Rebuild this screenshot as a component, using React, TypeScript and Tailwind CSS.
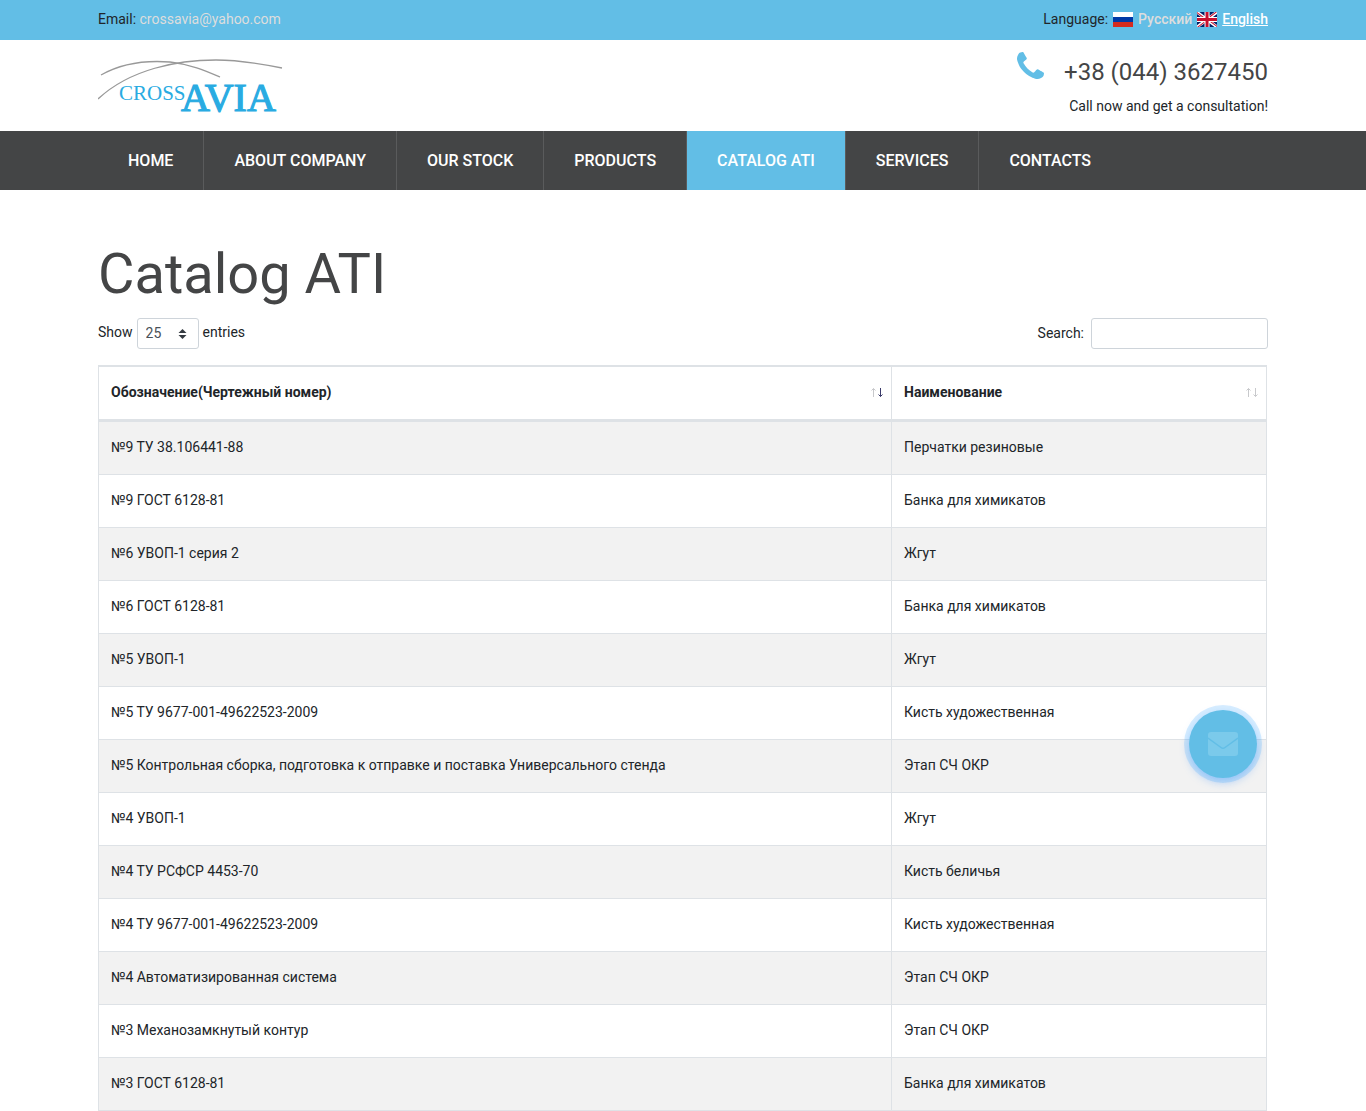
import { useState } from 'react'

type Part = { code: string; name: string }

const NAV = ['Home', 'About company', 'Our stock', 'Products', 'Catalog ATI', 'Services', 'Contacts']

const PARTS: Part[] = [
  { code: '№9 ТУ 38.106441-88', name: 'Перчатки резиновые' },
  { code: '№9 ГОСТ 6128-81', name: 'Банка для химикатов' },
  { code: '№6 УВОП-1 серия 2', name: 'Жгут' },
  { code: '№6 ГОСТ 6128-81', name: 'Банка для химикатов' },
  { code: '№5 УВОП-1', name: 'Жгут' },
  { code: '№5 ТУ 9677-001-49622523-2009', name: 'Кисть художественная' },
  { code: '№5 Контрольная сборка, подготовка к отправке и поставка Универсального стенда', name: 'Этап СЧ ОКР' },
  { code: '№4 УВОП-1', name: 'Жгут' },
  { code: '№4 ТУ РСФСР 4453-70', name: 'Кисть беличья' },
  { code: '№4 ТУ 9677-001-49622523-2009', name: 'Кисть художественная' },
  { code: '№4 Автоматизированная система', name: 'Этап СЧ ОКР' },
  { code: '№3 Механозамкнутый контур', name: 'Этап СЧ ОКР' },
  { code: '№3 ГОСТ 6128-81', name: 'Банка для химикатов' },
]

function Logo() {
  return (
    <svg width="190" height="68" viewBox="0 0 190 68" role="img" aria-label="CrossAvia">
      <g fill="none" stroke="#999" strokeWidth="1.3">
        <path d="M3 17C24 5 46 2 72 4C92 6 108 13 122 19" />
        <path d="M0 41C32 11 80 2 118 2C143 2 164 6 184 10" />
      </g>
      <g fill="#29abe2" fontFamily="'Liberation Serif', serif">
        <text x="21" y="42" fontSize="21">CROSS</text>
        <text x="83" y="53" fontSize="40" stroke="#29abe2" strokeWidth="1.200">AVIA</text>
      </g>
    </svg>
  )
}

function PhoneIcon() {
  return (
    <svg width="27" height="27" viewBox="0 0 1408 1408" fill="#62bee6" aria-hidden="true">
      <path d="M1408 1112q0 27-10 70.5t-21 68.5q-21 50-122 106-94 51-186 51-27 0-52.500-3.500t-57.500-12.500-47.500-14.500-55.500-20.500-49-18q-98-35-175-83-128-79-264.500-215.500t-215.500-264.500q-48-77-83-175-3-9-18-49t-20.500-55.500-14.500-47.500-12.500-57.500-3.500-52.500q0-92 51-186 56-101 106-122 25-11 68.500-21t70.500-10q14 0 21 3 18 6 53 76 11 19 30 54t35 63.500 31 53.500q3 4 17.500 25t21.500 35.500 7 28.500q0 20-28.500 50t-62 55-62 53-28.500 46q0 9 5 22.500t8.500 20.500 14 24 11.500 19q76 137 174 235t235 174q2 1 19 11.500t24 14 20.500 8.500 22.500 5q18 0 46-28.500t53-62 55-62 50-28.500q14 0 28.500 7t35.500 21.500 25 17.500q25 15 53.500 31t63.500 35 54 30q70 35 76 53 3 7 3 21z" />
    </svg>
  )
}

function FlagRu() {
  return (
    <svg width="20" height="15" viewBox="0 0 20 15" aria-hidden="true">
      <path fill="#fff" d="M0 0h20v5H0z" />
      <path fill="#0039a6" d="M0 5h20v5H0z" />
      <path fill="#d52b1e" d="M0 10h20v5H0z" />
    </svg>
  )
}

function FlagGb() {
  return (
    <svg width="20" height="15" viewBox="0 0 640 480" aria-hidden="true">
      <path fill="#012169" d="M0 0h640v480H0z" />
      <path fill="#fff" d="m75 0 244 181L562 0h78v62L400 241l240 178v61h-80L320 301 81 480H0v-60l239-178L0 64V0z" />
      <path fill="#c8102e" d="m424 281 216 159v40L369 281zm-184 20 6 35L54 480H0zM640 0v3L391 191l2-44L590 0zM0 0l239 176h-60L0 42z" />
      <path fill="#fff" d="M241 0v480h160V0zM0 160v160h640V160z" />
      <path fill="#c8102e" d="M0 193v96h640v-96zM273 0v480h96V0z" />
    </svg>
  )
}

function SortArrows({ active }: { active?: boolean }) {
  return (
    <svg width="13" height="9" viewBox="0 0 13 9" fill="none" aria-hidden="true">
      <path d="M2.500 9V.5M.5 2.500l2-2 2 2" stroke="#c8c9cc" />
      <path d="M9.500 0v8.500M7.500 6.500l2 2 2-2" stroke={active ? '#3a3a6a' : '#c8c9cc'} />
    </svg>
  )
}

function HeadCell({ label, active }: { label: string; active?: boolean }) {
  return (
    <th className="border-t border-r border-b-2 border-[#dee2e6] p-0 text-left" aria-sort={active ? 'descending' : 'none'}>
      <button className="flex w-full items-center justify-between pt-3 pr-[7px] pb-3.5 pl-3 leading-[26px] font-bold">
        {label}
        <SortArrows active={active} />
      </button>
    </th>
  )
}

export default function App() {
  const [query, setQuery] = useState('')
  const rows = PARTS.filter(p => (p.code + p.name).toLowerCase().includes(query.toLowerCase()))

  return (
    <div className="bg-white font-[Roboto,sans-serif] text-[14px] leading-7 text-[#212529]">

      {/* Top bar */}
      <div className="bg-[#62bee6]">
        <div className="mx-auto flex h-10 max-w-[1170px] items-center justify-between pb-0.5">
          <p>Email: <a href="mailto:crossavia@yahoo.com" className="text-[#ddd]">crossavia@yahoo.com</a></p>
          <div className="flex items-center gap-[5px]">
            <span>Language:</span>
            <FlagRu />
            <a href="#ru" className="font-medium text-[#ddd]">Русский</a>
            <FlagGb />
            <a href="#en" className="font-medium text-white underline">English</a>
          </div>
        </div>
      </div>

      {/* Logo and phone */}
      <header className="mx-auto flex h-[91px] max-w-[1170px] justify-between">
        <a href="#home" className="pt-[18px]"><Logo /></a>
        <div className="flex gap-5 pt-3">
          <PhoneIcon />
          <div className="text-right">
            <p className="text-2xl leading-10 text-[#444546]">+38 (044) 3627450</p>
            <p>Call now and get a consultation!</p>
          </div>
        </div>
      </header>

      <nav className="bg-[#444546]">
        <ul className="mx-auto flex max-w-[1170px]">
          {NAV.map(item => (
            <li key={item} className="border-r border-[#5a5b5c] last:border-r-0">
              <a
                href="#nav"
                className={`block px-[30px] text-base leading-[59px] font-medium text-white uppercase ${item === 'Catalog ATI' ? 'bg-[#62bee6]' : ''}`}
              >{item}</a>
            </li>
          ))}
        </ul>
      </nav>

      <main className="mx-auto max-w-[1170px] pt-[51px]">
        <h1 className="text-[56px] leading-[67px] text-[#444546]">Catalog ATI</h1>

        {/* Table controls */}
        <div className="mt-2.5 mb-4 flex items-center justify-between">
          <label className="flex items-start gap-1">
            <span>Show</span>
            <span className="relative">
              <select defaultValue="25" className="block h-[31px] w-[62px] appearance-none rounded-[3px] border border-[#ced4da] bg-white pb-0.5 pl-2 text-[#495057]">
                <option>10</option>
                <option>25</option>
                <option>50</option>
                <option>100</option>
              </select>
              <svg className="pointer-events-none absolute top-[11px] right-3" width="9" height="10" viewBox="0 0 4 5" fill="#343a40" aria-hidden="true">
                <path d="M2 0 0 2h4zm0 5L0 3h4z" />
              </svg>
            </span>
            <span>entries</span>
          </label>
          <label className="flex items-center gap-[7px]">
            <span className="leading-[26px] pb-0.5">Search:</span>
            <input
              type="search"
              value={query}
              onChange={e => setQuery(e.target.value)}
              className="h-[31px] w-[177px] rounded-[3px] border border-[#ced4da] px-2"
            />
          </label>
        </div>

        <div className="pr-px">
          <table className="w-full table-fixed border-separate border-spacing-0 border-y border-l border-[#dee2e6] leading-[26px]">
            <colgroup>
              <col />
              <col className="w-[375px]" />
            </colgroup>
            <thead>
              <tr>
                <HeadCell label="Обозначение(Чертежный номер)" active />
                <HeadCell label="Наименование" />
              </tr>
            </thead>
            <tbody>
              {rows.map((p, i) => (
                <tr key={i} className="odd:bg-[#f2f2f2]">
                  <td className="border-t border-r border-[#dee2e6] px-3 pt-3 pb-3.5">{p.code}</td>
                  <td className="border-t border-r border-[#dee2e6] px-3 pt-3 pb-3.5">{p.name}</td>
                </tr>
              ))}
            </tbody>
          </table>
        </div>
      </main>

      {/* Floating contact button */}
      <button
        aria-label="Write to us"
        className="fixed right-[109px] bottom-[333px] flex size-[68px] items-center justify-center rounded-full bg-[#62bee6] shadow-[0_0_0_5px_rgba(56,163,253,0.2),0_4px_10px_rgba(56,143,253,0.4)]"
      >
        <svg width="30" height="24" viewBox="0 0 30 24" fill="none" aria-hidden="true">
          <rect width="30" height="24" rx="3" fill="#7bcaeb" />
          <path d="M0 6 13 15.500q2 1.500 4 0L30 6" stroke="#62bee6" strokeWidth="1.500" />
        </svg>
      </button>
    </div>
  )
}
